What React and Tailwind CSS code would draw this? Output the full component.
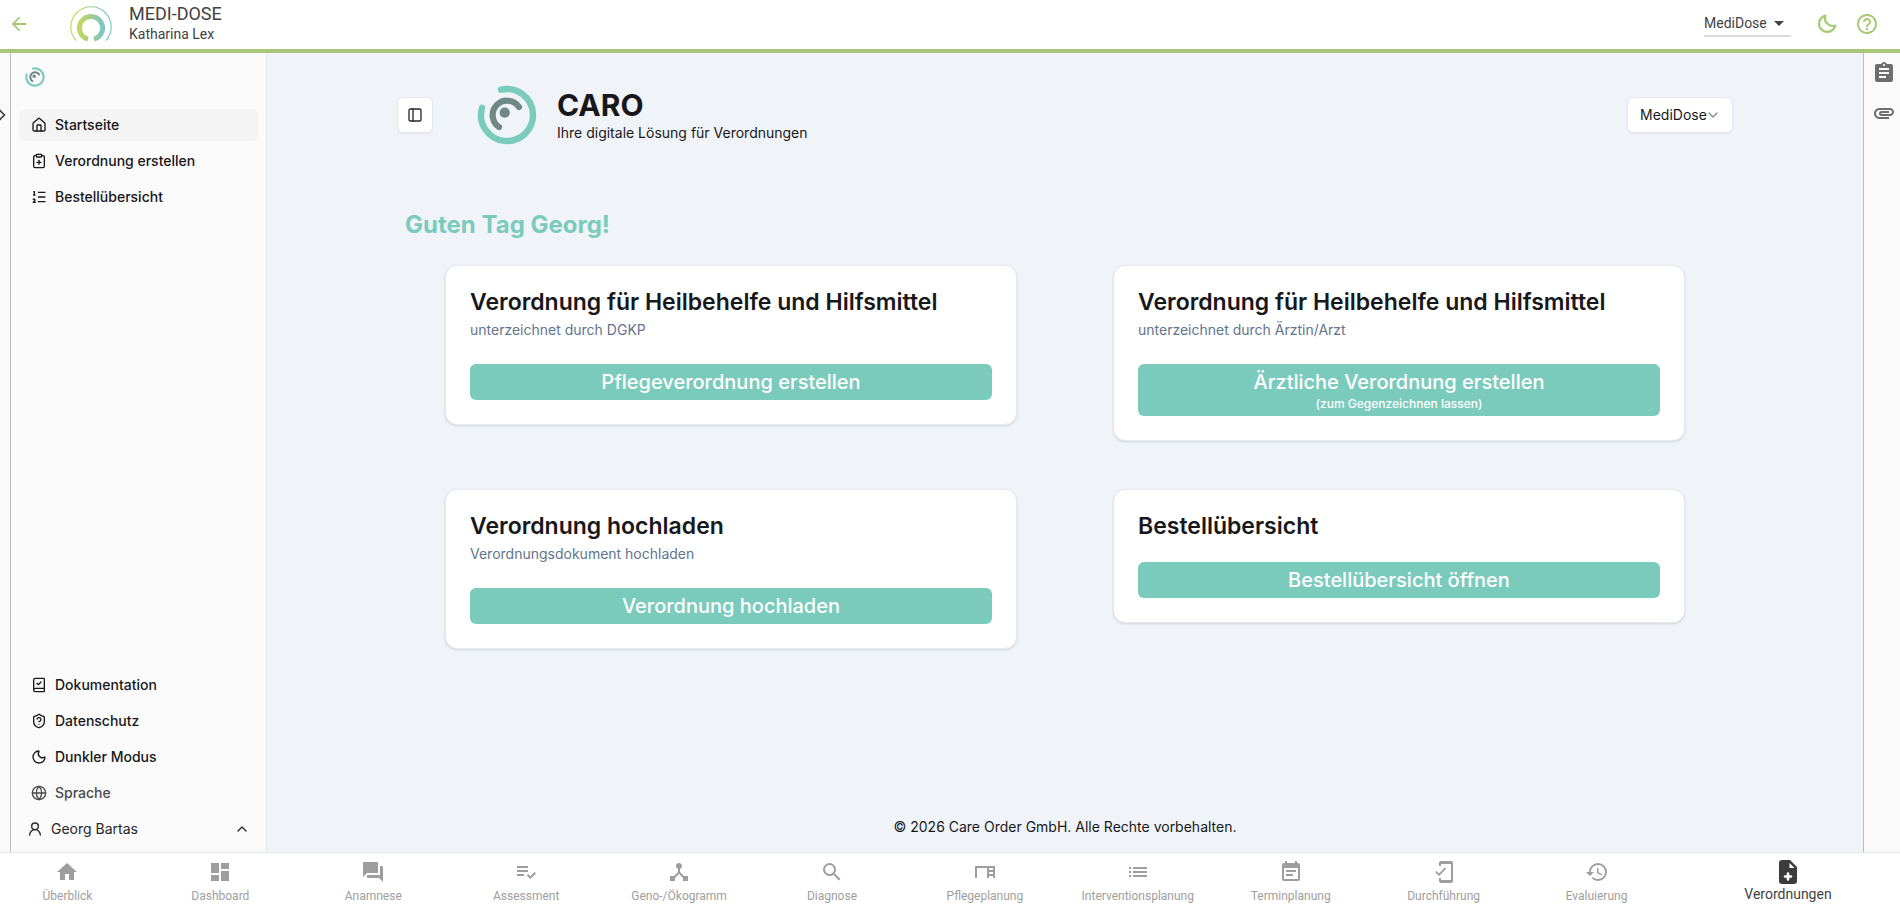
import React, { useState } from "react";
import {
  MdArrowBack,
  MdArrowDropDown,
  MdAssignment,
  MdAttachment,
  MdDashboard,
  MdDesk,
  MdDeviceHub,
  MdEventNote,
  MdForum,
  MdHelpOutline,
  MdHistory,
  MdHome,
  MdList,
  MdMobileFriendly,
  MdPlaylistAddCheck,
  MdSearch,
} from "react-icons/md";
import { BiMoon } from "react-icons/bi";
import {
  BookCheck,
  ChevronDown,
  ChevronRight,
  ChevronUp,
  ClipboardPlus,
  Globe,
  House,
  ListOrdered,
  Moon,
  PanelLeft,
  ShieldQuestionMark,
  UserRound,
} from "lucide-react";

const mainLinks = [
  { label: "Startseite", icon: House, active: true },
  { label: "Verordnung erstellen", icon: ClipboardPlus },
  { label: "Bestellübersicht", icon: ListOrdered },
];

const footerLinks = [
  { label: "Dokumentation", icon: BookCheck },
  { label: "Datenschutz", icon: ShieldQuestionMark },
  { label: "Dunkler Modus", icon: Moon },
  { label: "Sprache", icon: Globe, muted: true },
];

const cards = [
  {
    title: "Verordnung für Heilbehelfe und Hilfsmittel",
    text: "unterzeichnet durch DGKP",
    action: "Pflegeverordnung erstellen",
  },
  {
    title: "Verordnung für Heilbehelfe und Hilfsmittel",
    text: "unterzeichnet durch Ärztin/Arzt",
    action: "Ärztliche Verordnung erstellen",
    hint: "(zum Gegenzeichnen lassen)",
  },
  {
    title: "Verordnung hochladen",
    text: "Verordnungsdokument hochladen",
    action: "Verordnung hochladen",
  },
  { title: "Bestellübersicht", action: "Bestellübersicht öffnen" },
];

const tabs = [
  { label: "Überblick", icon: MdHome },
  { label: "Dashboard", icon: MdDashboard },
  { label: "Anamnese", icon: MdForum },
  { label: "Assessment", icon: MdPlaylistAddCheck },
  { label: "Geno-/Ökogramm", icon: MdDeviceHub },
  { label: "Diagnose", icon: MdSearch },
  { label: "Pflegeplanung", icon: MdDesk },
  { label: "Interventionsplanung", icon: MdList },
  { label: "Terminplanung", icon: MdEventNote },
  { label: "Durchführung", icon: MdMobileFriendly },
  { label: "Evaluierung", icon: MdHistory },
];

function CaroLogo({ className }) {
  return (
    <svg viewBox="-30 -30 60 60" fill="none" strokeLinecap="round" className={className}>
      <path d="M-6 -25.3A26 26 0 1 1 -25 -7.2" stroke="#7bcbbd" strokeWidth="6.4" />
      <path d="M12 -8A14.4 14.4 0 1 0 -8 12" stroke="#6f8785" strokeWidth="6.2" />
      <circle cx="-2.3" cy="-2.3" r="5.1" fill="#6f8785" />
    </svg>
  );
}

function BrandLogo() {
  return (
    <svg viewBox="0 0 42 36" fill="none" className="h-9 w-[42px]">
      <defs>
        <linearGradient id="brand" gradientUnits="userSpaceOnUse" x1="2" y1="0" x2="40" y2="0">
          <stop offset="0.2" stopColor="#c3d75f" />
          <stop offset="0.5" stopColor="#a3cd8c" />
          <stop offset="0.75" stopColor="#80c7bb" />
        </linearGradient>
      </defs>
      <path d="M6 34.5A20.2 20.2 0 1 1 36 34.5" stroke="url(#brand)" strokeWidth="1.2" />
      <path d="M18 33.2A11.6 11.6 0 1 1 24 33.2" stroke="url(#brand)" strokeWidth="5" />
    </svg>
  );
}

function FilePlusIcon() {
  return (
    <svg viewBox="0 0 18 24" className="h-6 w-[18px]">
      <path d="M3 0h8l7 7v14a3 3 0 0 1-3 3H3a3 3 0 0 1-3-3V3a3 3 0 0 1 3-3z" fill="#3c3c3c" />
      <path d="M10.5 3v5H15.500z" fill="#fff" />
      <path d="M9 13.500v6M6 16.500h6" stroke="#fff" strokeWidth="2.600" strokeLinecap="round" />
    </svg>
  );
}

function TopBar({ client, onClient }) {
  return (
    <header className="flex h-[53px] shrink-0 items-center border-b-4 border-[#a9c67b] bg-white pr-[21px] pb-0.5 pl-2 font-[Roboto,sans-serif] text-[#424242]">
      <button aria-label="Zurück" className="text-[#a5c973]">
        <MdArrowBack size={22} />
      </button>
      <div className="ml-10">
        <BrandLogo />
      </div>
      <div className="ml-[17px]">
        <div className="text-lg leading-5">MEDI-DOSE</div>
        <div className="text-sm leading-5">Katharina Lex</div>
      </div>
      <div className="relative ml-auto flex items-center border-b-2 border-[#dcdcdc]">
        <select
          aria-label="Mandant"
          value={client}
          onChange={(e) => onClient(e.target.value)}
          className="h-6 w-[87px] appearance-none bg-transparent text-sm outline-none"
        >
          <option>MediDose</option>
        </select>
        <MdArrowDropDown size={24} className="pointer-events-none absolute right-0" />
      </div>
      <button aria-label="Dunkler Modus" className="ml-[25px] text-[#a5c973]">
        <BiMoon size={22} stroke="currentColor" strokeWidth="0.6" />
      </button>
      <button aria-label="Hilfe" className="ml-[17px] text-[#a5c973]">
        <MdHelpOutline size={24} />
      </button>
    </header>
  );
}

function SideLink({ item }) {
  const Icon = item.icon;
  return (
    <li>
      <a
        href="#"
        className={`flex h-8 items-center gap-2 rounded-md px-3 text-sm font-medium ${
          item.active ? "bg-[#f4f4f5]" : ""
        } ${item.muted ? "text-[#4b4b4f]" : "text-[#18181b]"}`}
      >
        <Icon size={16} />
        {item.label}
      </a>
    </li>
  );
}

function Sidebar() {
  return (
    <aside className="flex w-64 shrink-0 flex-col border-r border-gray-200 bg-[#fafafa] px-2 pb-[7px]">
      <CaroLogo className="mt-3.5 ml-1.5 size-5" />
      <ul className="mt-[22px] flex flex-col gap-1">
        {mainLinks.map((item) => (
          <SideLink key={item.label} item={item} />
        ))}
      </ul>
      <ul className="mt-auto flex flex-col gap-1">
        {footerLinks.map((item) => (
          <SideLink key={item.label} item={item} />
        ))}
      </ul>
      <button className="mt-1 flex h-8 items-center gap-2 px-2 text-sm text-[#27272a]">
        <UserRound size={16} />
        Georg Bartas
        <ChevronUp size={16} className="ml-auto" />
      </button>
    </aside>
  );
}

function ActionCard({ card }) {
  return (
    <div className="rounded-xl border border-slate-200 bg-white p-6 pt-5 shadow-sm">
      <h3 className="text-[23px] leading-8 font-semibold text-[#18181b]">{card.title}</h3>
      {card.text && <p className="mt-0.5 mb-6 text-sm leading-5 text-slate-500">{card.text}</p>}
      <button className="mt-5 flex min-h-9 w-full flex-col items-center justify-center rounded-md bg-[#7bcbbd] py-1 font-medium text-white [p+&]:mt-0">
        <span className="text-xl leading-7">{card.action}</span>
        {card.hint && <span className="text-xs leading-4">{card.hint}</span>}
      </button>
    </div>
  );
}

export default function App() {
  const [client, setClient] = useState("MediDose");

  return (
    <div className="flex min-h-screen flex-col bg-[#fafafa] font-[Inter,sans-serif]">
      <TopBar client={client} onClient={setClient} />

      <div className="flex flex-1">
        <div className="flex w-[11px] shrink-0 overflow-hidden border-r border-[#bdbdbd]">
          <button aria-label="Menü öffnen" className="mt-[52px] -ml-2 shrink-0 self-start text-[#3c3c3c]">
            <ChevronRight size={20} />
          </button>
        </div>

        <Sidebar />

        <main className="flex flex-1 flex-col bg-[#f0f4f9] px-12">
          <div className="mx-auto w-full max-w-[1336px]">
            <div className="flex items-center pt-8">
              <button
                aria-label="Seitenleiste umschalten"
                className="flex size-9 items-center justify-center rounded-md border border-slate-200 bg-white text-[#27272a] shadow-xs"
              >
                <PanelLeft size={16} />
              </button>
              <CaroLogo className="ml-11 size-[60px]" />
              <div className="ml-5 text-[#18181b]">
                <h1 className="text-3xl leading-9 font-bold">CARO</h1>
                <p className="text-sm leading-5">Ihre digitale Lösung für Verordnungen</p>
              </div>
              <div className="relative ml-auto flex items-center">
                <select
                  aria-label="Organisation"
                  value={client}
                  onChange={(e) => setClient(e.target.value)}
                  className="h-9 w-[106px] appearance-none rounded-md border border-slate-200 bg-white px-3 text-sm text-[#18181b] shadow-xs"
                >
                  <option>MediDose</option>
                </select>
                <ChevronDown size={16} className="pointer-events-none absolute right-3 text-[#8a8a8a]" />
              </div>
            </div>

            <h2 className="mt-16 ml-2 text-2xl leading-8 font-bold text-[#7bcbbd]">Guten Tag Georg!</h2>

            <div className="mt-6 grid grid-cols-2 items-start gap-x-24 gap-y-12 px-12">
              {cards.map((card) => (
                <ActionCard key={card.action} card={card} />
              ))}
            </div>
          </div>

          <footer className="mt-auto pt-8 pb-[15px] text-center text-sm leading-5 text-[#18181b]">
            © 2026 Care Order GmbH. Alle Rechte vorbehalten.
          </footer>
        </main>

        <aside className="flex w-[37px] shrink-0 flex-col items-center gap-4 border-l border-[#bdbdbd] pt-2 pl-1 text-[#6e6e6e]">
          <button aria-label="Aufgaben">
            <MdAssignment size={24} />
          </button>
          <button aria-label="Anhänge">
            <MdAttachment size={24} />
          </button>
        </aside>
      </div>

      <nav className="flex h-[59px] shrink-0 gap-[18px] border-t border-gray-200 bg-white pr-1.5 font-[Roboto,sans-serif]">
        {tabs.map((tab) => (
          <a
            key={tab.label}
            href="#"
            className="flex flex-1 basis-0 flex-col items-center pt-[7px] text-xs leading-4 text-[#9e9e9e]"
          >
            <tab.icon size={24} />
            <span className="mt-1">{tab.label}</span>
          </a>
        ))}
        <a
          href="#"
          className="flex w-[212px] shrink-0 flex-col items-center pt-[7px] text-sm leading-5 text-[#424242]"
        >
          <FilePlusIcon />
          Verordnungen
        </a>
      </nav>
    </div>
  );
}
